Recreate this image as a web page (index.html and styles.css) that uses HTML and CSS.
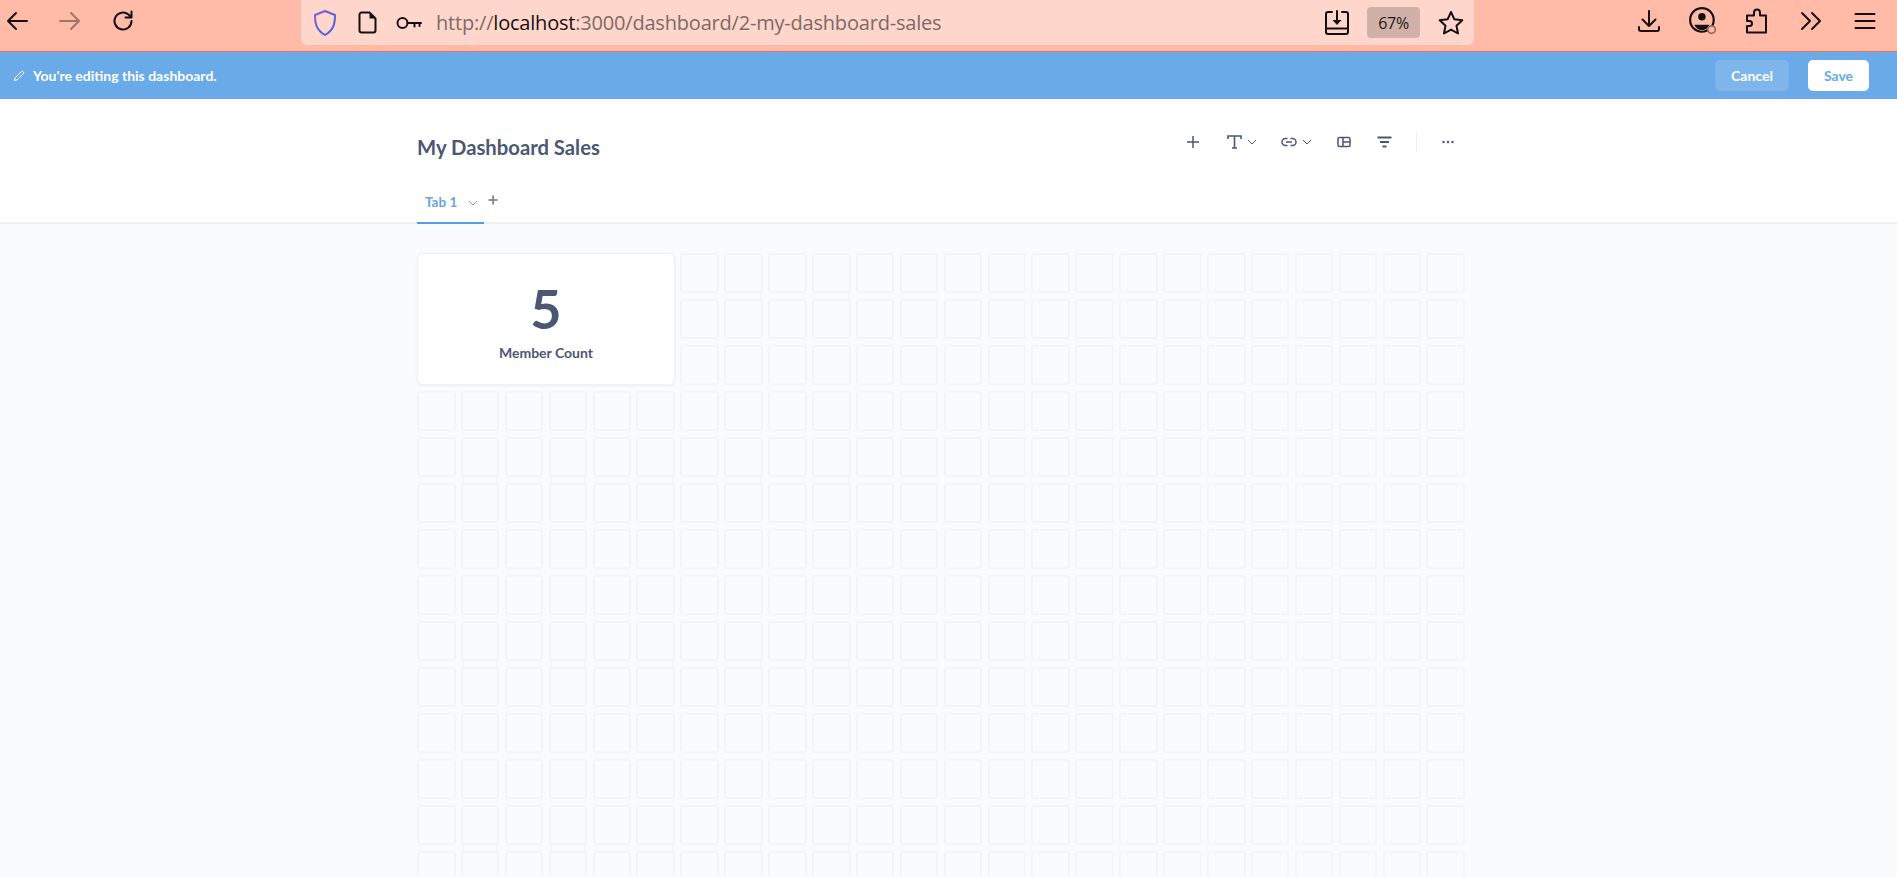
FILE: index.html
```html
<!DOCTYPE html>
<html lang="en">
<head>
<meta charset="utf-8">
<title>My Dashboard Sales</title>
<link rel="stylesheet" href="styles.css">
</head>
<body>
<div class="browser">
  <div class="nav">
    <span class="tb-btn"><svg width="24" height="24" viewBox="0 0 24 24" class="ic"><path d="M22 12H3M11 4l-8 8 8 8"/></svg></span>
    <span class="tb-btn dim"><svg width="24" height="24" viewBox="0 0 24 24" class="ic"><path d="M2 12h19M13 4l8 8-8 8"/></svg></span>
    <span class="tb-btn"><svg width="24" height="24" viewBox="0 0 24 24" class="ic"><path d="M20.5 12a8.5 8.500 0 1 1-3-6.500L20 8M20.500 2.500V8.500h-6"/></svg></span>
  </div>
  <div class="urlbar">
    <svg class="shield" width="24" height="27" viewBox="0 0 24 27"><defs><linearGradient id="sg" x1="0" y1="0" x2="1" y2="1"><stop offset="0" stop-color="#8a5fd8"/><stop offset="1" stop-color="#3f5fd8"/></linearGradient></defs><path d="M12 2 L22 6c0 8-1 15-10 20C3 21 2 14 2 6z" fill="none" stroke="url(#sg)" stroke-width="2" stroke-linejoin="round"/></svg>
    <svg class="doc ic" width="20" height="23" viewBox="0 0 20 23"><path d="M3.500 1.500h8l6 6v12a2 2 0 0 1-2 2h-12a2 2 0 0 1-2-2v-16a2 2 0 0 1 2-2z"/><path class="solid" d="M11.500 1.500l6 6h-6z"/></svg>
    <svg class="key ic" width="26" height="14" viewBox="0 0 26 14"><circle cx="6.500" cy="7" r="5"/><path d="M11.500 7H25M18.500 7v3.500M23.500 7v3"/></svg>
    <div class="url"><span class="url-muted">http://</span>localhost<span class="url-muted">:3000/dashboard/2-my-dashboard-sales</span></div>
    <svg class="save-page ic" width="24" height="26" viewBox="0 0 24 26"><path d="M7 2H3a2 2 0 0 0-2 2v18a2 2 0 0 0 2 2h18a2 2 0 0 0 2-2V4a2 2 0 0 0-2-2h-4M1 18.500h22M12 1v11"/><path class="solid" d="M7.500 10h9L12 15z"/></svg>
    <div class="zoom-chip">67%</div>
    <svg class="star ic" width="26" height="25" viewBox="0 0 26 25"><path d="M13 2l3.400 7.300 7.900 1-5.800 5.400 1.500 7.800-7-3.900-7 3.900 1.500-7.800L1.700 10.300l7.900-1z"/></svg>
  </div>
  <div class="tools">
    <span class="tb-btn"><svg width="24" height="24" viewBox="0 0 24 24" class="ic"><path d="M12 2v15M5.500 10.500 12 17l6.500-6.500M2 18v2a2 2 0 0 0 2 2h16a2 2 0 0 0 2-2v-2"/></svg></span>
    <span class="tb-btn"><svg class="account ic" width="30" height="30" viewBox="0 0 28 28"><circle cx="13" cy="13" r="11"/><circle class="solid" cx="13" cy="10" r="3.500"/><path class="solid" d="M6 17.500h14c-1 3-4 5-7 5s-6-2-7-5z"/><circle class="badge" cx="22" cy="22" r="3.500"/></svg></span>
    <span class="tb-btn"><svg width="24" height="26" viewBox="0 0 24 26" class="ic"><path d="M2 24.500V18h2.500a2.500 2.500 0 0 0 0-5H2V7.500h7V4.500a3 3 0 0 1 6 0v3h6v17z"/></svg></span>
    <span class="tb-btn"><svg width="24" height="20" viewBox="0 0 24 20" class="ic"><path d="M3 2l8 8-8 8M13 2l8 8-8 8"/></svg></span>
    <span class="tb-btn"><svg width="24" height="20" viewBox="0 0 24 20" class="ic"><path d="M2.500 3h19M2.500 10h19M2.500 17h19"/></svg></span>
  </div>
</div>

<div class="editbar">
  <div class="edit-note">
    <svg class="pencil" width="12" height="12" viewBox="0 0 12 12"><path d="M1.500 10.500l.6-2.600L8.300 1.700a1.200 1.200 0 0 1 1.800 0l.2.200a1.200 1.200 0 0 1 0 1.800L4.100 9.900z"/></svg>
    <span>You're editing this dashboard.</span>
  </div>
  <div class="edit-actions">
    <button class="btn btn-cancel">Cancel</button>
    <button class="btn btn-save">Save</button>
  </div>
</div>

<header class="dash-header">
  <div class="container">
    <div class="title-row">
      <h1 class="title">My Dashboard Sales</h1>
      <div class="toolbar">
        <svg class="t-plus" width="14" height="14" viewBox="0 0 14 14"><path d="M7 1v12M1 7h12"/></svg>
        <svg class="t-text" width="15" height="14" viewBox="0 0 15 14"><path d="M1 4V1h13v3M7.500 1v12M5 13h5"/></svg>
        <svg class="t-chev" width="10" height="6" viewBox="0 0 10 6"><path d="M1 1l4 4 4-4"/></svg>
        <svg class="t-link" width="16" height="10" viewBox="0 0 16 10"><path d="M6.500 1.500H4.500a3.500 3.500 0 0 0 0 7h2M9.500 1.500h2a3.500 3.500 0 0 1 0 7h-2M5 5h6"/></svg>
        <svg class="t-chev" width="10" height="6" viewBox="0 0 10 6"><path d="M1 1l4 4 4-4"/></svg>
        <svg class="t-table" width="14" height="12" viewBox="0 0 14 12"><rect x="1" y="1.500" width="12" height="9" rx="1.500"/><path d="M6 1.500v9M6 6h7"/></svg>
        <svg class="t-filter" width="15" height="12" viewBox="0 0 15 12"><path d="M.5 1.500h14M3 6h9M5.500 10.500h4"/></svg>
        <span class="t-divider"></span>
        <svg class="t-dots" width="12" height="4" viewBox="0 0 12 4"><circle cx="1.500" cy="2" r="1.200"/><circle cx="6" cy="2" r="1.200"/><circle cx="10.500" cy="2" r="1.200"/></svg>
      </div>
    </div>
    <div class="tabs">
      <div class="tab"><span>Tab 1</span><svg width="10" height="6" viewBox="0 0 10 6"><path d="M1 1l4 4 4-4"/></svg></div>
      <svg class="tab-add" width="10" height="10" viewBox="0 0 10 10"><path d="M5 .5v9M.5 5h9"/></svg>
    </div>
  </div>
</header>

<main class="canvas">
  <div class="grid">
    <section class="card">
      <div class="card-value">5</div>
      <div class="card-label">Member Count</div>
    </section>
    <i></i><i></i><i></i><i></i><i></i><i></i><i></i><i></i><i></i><i></i><i></i><i></i><i></i><i></i><i></i><i></i><i></i><i></i>
    <i></i><i></i><i></i><i></i><i></i><i></i><i></i><i></i><i></i><i></i><i></i><i></i><i></i><i></i><i></i><i></i><i></i><i></i>
    <i></i><i></i><i></i><i></i><i></i><i></i><i></i><i></i><i></i><i></i><i></i><i></i><i></i><i></i><i></i><i></i><i></i><i></i>
    <i></i><i></i><i></i><i></i><i></i><i></i><i></i><i></i><i></i><i></i><i></i><i></i><i></i><i></i><i></i><i></i><i></i><i></i><i></i><i></i><i></i><i></i><i></i><i></i>
    <i></i><i></i><i></i><i></i><i></i><i></i><i></i><i></i><i></i><i></i><i></i><i></i><i></i><i></i><i></i><i></i><i></i><i></i><i></i><i></i><i></i><i></i><i></i><i></i>
    <i></i><i></i><i></i><i></i><i></i><i></i><i></i><i></i><i></i><i></i><i></i><i></i><i></i><i></i><i></i><i></i><i></i><i></i><i></i><i></i><i></i><i></i><i></i><i></i>
    <i></i><i></i><i></i><i></i><i></i><i></i><i></i><i></i><i></i><i></i><i></i><i></i><i></i><i></i><i></i><i></i><i></i><i></i><i></i><i></i><i></i><i></i><i></i><i></i>
    <i></i><i></i><i></i><i></i><i></i><i></i><i></i><i></i><i></i><i></i><i></i><i></i><i></i><i></i><i></i><i></i><i></i><i></i><i></i><i></i><i></i><i></i><i></i><i></i>
    <i></i><i></i><i></i><i></i><i></i><i></i><i></i><i></i><i></i><i></i><i></i><i></i><i></i><i></i><i></i><i></i><i></i><i></i><i></i><i></i><i></i><i></i><i></i><i></i>
    <i></i><i></i><i></i><i></i><i></i><i></i><i></i><i></i><i></i><i></i><i></i><i></i><i></i><i></i><i></i><i></i><i></i><i></i><i></i><i></i><i></i><i></i><i></i><i></i>
    <i></i><i></i><i></i><i></i><i></i><i></i><i></i><i></i><i></i><i></i><i></i><i></i><i></i><i></i><i></i><i></i><i></i><i></i><i></i><i></i><i></i><i></i><i></i><i></i>
    <i></i><i></i><i></i><i></i><i></i><i></i><i></i><i></i><i></i><i></i><i></i><i></i><i></i><i></i><i></i><i></i><i></i><i></i><i></i><i></i><i></i><i></i><i></i><i></i>
    <i></i><i></i><i></i><i></i><i></i><i></i><i></i><i></i><i></i><i></i><i></i><i></i><i></i><i></i><i></i><i></i><i></i><i></i><i></i><i></i><i></i><i></i><i></i><i></i>
    <i></i><i></i><i></i><i></i><i></i><i></i><i></i><i></i><i></i><i></i><i></i><i></i><i></i><i></i><i></i><i></i><i></i><i></i><i></i><i></i><i></i><i></i><i></i><i></i>
  </div>
</main>
</body>
</html>
```

FILE: styles.css
```css
* { box-sizing: border-box; }
html, body { margin: 0; height: 877px; overflow: hidden; background: #f9fbfc; }
body { font-family: Lato, "Liberation Sans", sans-serif; color: #4c5773; }

/* browser chrome */
.browser { height: 52px; display: flex; align-items: flex-start; background: #ffbba8; border-bottom: 1px solid #e8745a; }
.ic { fill: none; stroke: #15100e; stroke-width: 2; stroke-linecap: round; stroke-linejoin: round; flex: none; }
.ic .solid { fill: #15100e; stroke: none; }
.ic .badge { fill: #ffbba8; stroke: #8a6a60; stroke-width: 1.500; }
.tb-btn { width: 24px; height: 42px; display: flex; align-items: center; justify-content: center; flex: none; }
.dim { opacity: .4; }
.nav { width: 301px; flex: none; display: flex; gap: 29px; padding-left: 5px; }
.urlbar { width: 1173px; height: 45px; flex: none; display: flex; align-items: center; background: #ffd6cc; border-radius: 0 0 6px 6px; padding: 0 10px 0 12px; }
.shield { flex: none; }
.doc { margin-left: 21px; }
.key { margin-left: 18px; }
.url { margin-left: 14px; flex: 1; font: 400 20px/24px "Open Sans", sans-serif; color: #15100e; white-space: nowrap; letter-spacing: -.2px; }
.url-muted { color: #7d6a65; }
.zoom-chip { width: 53px; height: 31px; margin-left: 18px; border-radius: 4px; background: #d1b0a8; display: flex; align-items: center; justify-content: center; font: 400 16px "Open Sans", sans-serif; letter-spacing: -.3px; color: #231815; }
.star { margin-left: 18px; }
.tools { flex: 1; display: flex; justify-content: flex-end; gap: 30px; padding-right: 20px; }

/* edit bar */
.editbar { height: 47px; display: flex; align-items: center; justify-content: space-between; background: #6aaae8; padding: 0 28px 0 13px; color: #fff; }
.edit-note { display: flex; align-items: center; gap: 8px; font-size: 14px; font-weight: 700; }
.pencil { fill: none; stroke: #fff; stroke-width: 1; }
.edit-actions { display: flex; gap: 19px; }
.btn { height: 31px; border: 0; border-radius: 5px; font: 700 14px Lato, sans-serif; padding: 0; }
.btn-cancel { width: 74px; background: #7eb6ec; color: #fff; }
.btn-save { width: 61px; background: #fff; color: #6aaae8; }

/* dashboard header */
.dash-header { height: 125px; background: #fff; border-bottom: 2px solid #edf0f3; }
.container { margin-left: 417px; width: 1048px; }
.title-row { display: flex; justify-content: space-between; align-items: flex-start; height: 81px; }
.title { margin: 34px 0 0; font-size: 20.250px; line-height: 28px; font-weight: 700; }
.toolbar { display: flex; align-items: center; height: 20px; margin-top: 33px; padding-right: 11px; }
.toolbar svg { fill: none; stroke: #4c5773; stroke-width: 1.500; flex: none; }
.toolbar .t-chev { stroke-width: 1; }
.t-text { margin-left: 27px; }
.toolbar svg.t-text { stroke-width: 1.600; }
.t-text + .t-chev { margin-left: 5px; }
.t-link { margin-left: 24px; }
.t-link + .t-chev { margin-left: 5px; }
.t-table { margin-left: 25px; }
.t-filter { margin-left: 26px; }
.toolbar svg.t-filter { stroke-width: 2; }
.t-divider { width: 1px; height: 20px; background: #edf0f3; margin-left: 24px; }
.t-dots { margin-left: 25px; }
.toolbar svg.t-dots { fill: #4c5773; stroke: none; }

.tabs { display: flex; align-items: flex-start; height: 42px; }
.tab { width: 67px; height: 44px; padding: 14px 0 0 8px; display: flex; align-items: flex-start; gap: 11px; border-bottom: 2px solid #509ee3; color: #6aa4de; font-size: 13.500px; line-height: 16px; font-weight: 700; }
.tab svg { fill: none; stroke: #6aa4de; stroke-width: 1; margin-top: 6px; flex: none; }
.tab-add { margin: 15px 0 0 4px; fill: none; stroke: #6b7488; stroke-width: 1.500; }

/* grid canvas */
.canvas { padding: 29px 0 0 417px; }
.grid { width: 1048px; display: grid; grid-template-columns: repeat(24, 38.500px); grid-auto-rows: 40px; column-gap: 5.400px; row-gap: 6px; }
.grid i { display: block; border: 2px solid #f3f5f7; border-radius: 3px; }
.card { grid-column: span 6; grid-row: span 3; background: #fff; border: 1px solid #eef0f3; border-radius: 5px; box-shadow: 0 1px 3px rgba(0,0,0,.06); display: flex; flex-direction: column; align-items: center; }
.card-value { margin-top: 23px; font-size: 54px; line-height: 64px; font-weight: 700; }
.card-label { margin-top: 3px; font-size: 14px; line-height: 18px; font-weight: 700; }
```
